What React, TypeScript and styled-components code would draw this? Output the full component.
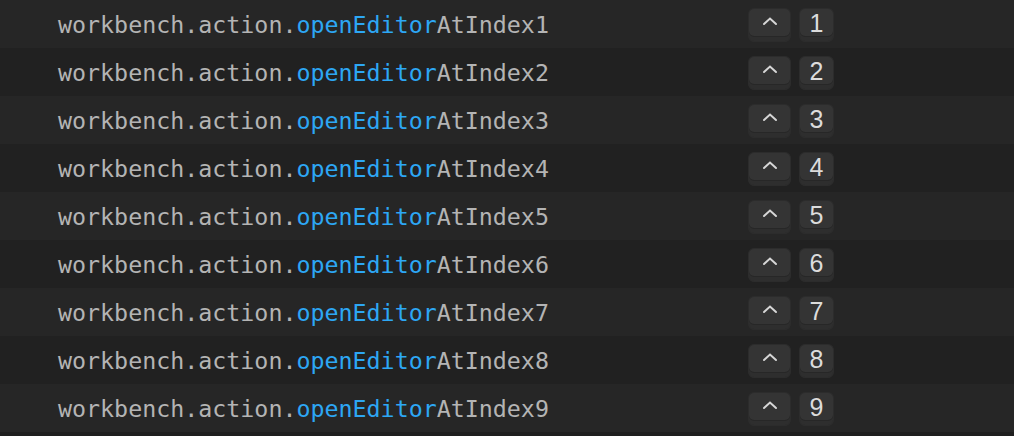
import React from "react";
import styled, { createGlobalStyle } from "styled-components";

const GlobalStyle = createGlobalStyle`
  html, body {
    margin: 0;
    padding: 0;
    background: #1f1f1f;
  }
`;

const List = styled.div`
  width: 1014px;
  height: 436px;
  background: #1f1f1f;
  overflow: hidden;
`;

const Row = styled.div<{ $odd: boolean }>`
  height: 48px;
  display: grid;
  grid-template-columns: 690px auto;
  align-items: center;
  padding-left: 58px;
  background: ${(p) => (p.$odd ? "#262626" : "#212121")};
`;

const Command = styled.span`
  font-family: "DejaVu Sans Mono", monospace;
  font-size: 23.3px;
  color: #b4b4b4;
  white-space: pre;
`;

const Highlight = styled.span`
  color: #2da7f4;
`;

const Keys = styled.div`
  display: flex;
  gap: 8px;
  margin-top: 1px;
`;

const Key = styled.span<{ $wide?: boolean }>`
  box-sizing: border-box;
  width: ${(p) => (p.$wide ? "43px" : "35px")};
  height: 34px;
  display: flex;
  align-items: center;
  justify-content: center;
  padding-bottom: 2px;
  border-radius: 6px;
  background: #343434;
  border: 1px solid #2c2c2c;
  box-shadow: inset 0 -4px 0 #2e2e2e, inset 0 -5px 0 #272727;
  color: #dcdcdc;
  font-family: "Liberation Sans", Arial, sans-serif;
  font-size: 25px;
  line-height: 1;
`;

const Caret = styled.svg`
  width: 16px;
  height: 10px;
  margin-top: -6px;
`;

export default function App() {
  const items = [1, 2, 3, 4, 5, 6, 7, 8, 9];
  return (
    <List>
      <GlobalStyle />
      {items.map((n, i) => (
        <Row key={n} $odd={i % 2 === 0}>
          <Command>
            workbench.action.<Highlight>openEditor</Highlight>AtIndex{n}
          </Command>
          <Keys>
            <Key $wide>
              <Caret viewBox="0 0 16 10">
                <path
                  d="M2 8 L8 2.5 L14 8"
                  fill="none"
                  stroke="#d6d6d6"
                  strokeWidth="2"
                  strokeLinecap="round"
                />
              </Caret>
            </Key>
            <Key>{n}</Key>
          </Keys>
        </Row>
      ))}
    </List>
  );
}
